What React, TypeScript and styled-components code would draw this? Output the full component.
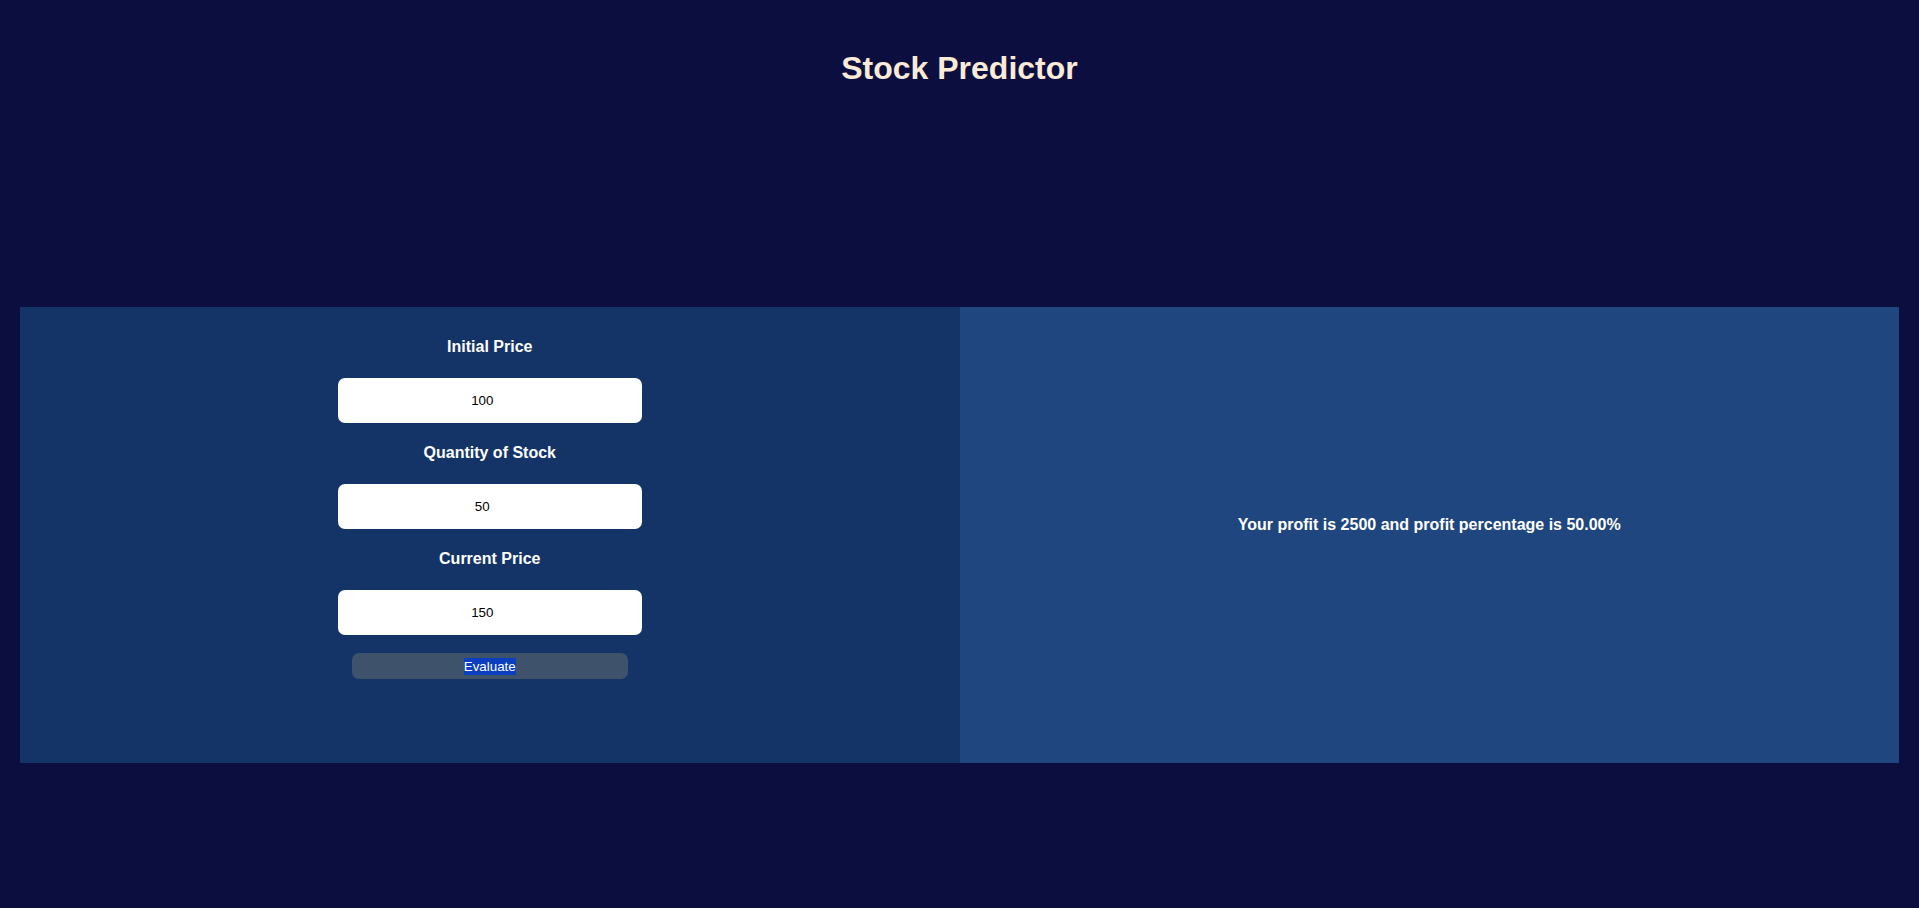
import React from "react";
import styled, { createGlobalStyle } from "styled-components";

const Global = createGlobalStyle`
  html, body { margin: 0; padding: 0; background: #0d0e40; }
  body { font-family: "Liberation Sans", Arial, sans-serif; }
  input[type=number]::-webkit-inner-spin-button { opacity: 0; }
`;

const Page = styled.div`
  min-height: 908px;
  background: #0d0e40;
  padding: 0 20px;
  box-sizing: border-box;
  display: flex;
  flex-direction: column;
`;

const Title = styled.h1`
  margin: 50px 0 0;
  font-size: 32px;
  line-height: 37px;
  font-weight: 700;
  color: #faebd7;
  text-align: center;
`;

const Panels = styled.div`
  margin-top: 220px;
  display: grid;
  grid-template-columns: 1fr 1fr;
  height: 456px;
`;

const FormPanel = styled.div`
  background: #143467;
  display: flex;
  flex-direction: column;
  align-items: center;
  padding-top: 10px;
`;

const ResultPanel = styled.div`
  background: #1f467e;
  display: flex;
  align-items: center;
  justify-content: center;
  padding-bottom: 20px;
  box-sizing: border-box;
`;

const Label = styled.label`
  display: block;
  font-size: 16px;
  line-height: 18px;
  font-weight: 700;
  color: #ffffff;
  margin: 21px 0 22px;
`;

const Input = styled.input`
  width: 304px;
  height: 45px;
  box-sizing: border-box;
  border: none;
  border-radius: 7px;
  background: #ffffff;
  color: #000;
  text-align: center;
  font-family: "Liberation Sans", Arial, sans-serif;
  font-size: 13.33px;
  outline: none;
`;

const Button = styled.button`
  margin-top: 18px;
  width: 276px;
  height: 26px;
  border: none;
  border-radius: 7px;
  background: #3f526c;
  color: #ffffff;
  font-family: "Liberation Sans", Arial, sans-serif;
  font-size: 13.33px;
  padding: 0;
  cursor: pointer;
`;

const Selected = styled.span`
  background: #0b3fbf;
  padding: 1px 0;
`;

const Result = styled.p`
  margin: 0;
  font-size: 16px;
  font-weight: 700;
  color: #ffffff;
`;

export default function App() {
  return (
    <>
      <Global />
      <Page>
        <Title>Stock Predictor</Title>
        <Panels>
          <FormPanel>
            <Label htmlFor="ip">Initial Price</Label>
            <Input id="ip" type="number" defaultValue={100} />
            <Label htmlFor="qs">Quantity of Stock</Label>
            <Input id="qs" type="number" defaultValue={50} />
            <Label htmlFor="cp">Current Price</Label>
            <Input id="cp" type="number" defaultValue={150} />
            <Button>
              <Selected>Evaluate</Selected>
            </Button>
          </FormPanel>
          <ResultPanel>
            <Result>Your profit is 2500 and profit percentage is 50.00%</Result>
          </ResultPanel>
        </Panels>
      </Page>
    </>
  );
}
